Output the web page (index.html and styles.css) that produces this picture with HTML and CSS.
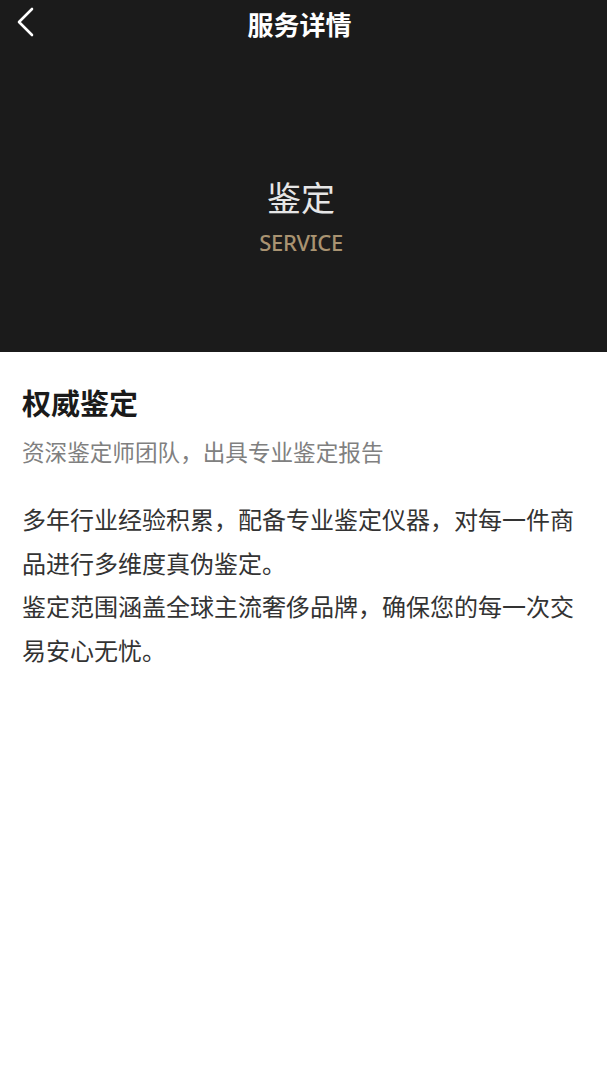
FILE: index.html
```html
<!DOCTYPE html>
<html lang="zh-CN">
<head>
<meta charset="utf-8">
<title>服务详情</title>
<link rel="stylesheet" href="styles.css">
</head>
<body>
<header class="header">
  <div class="nav">
    <div class="back">
      <svg width="20" height="30" viewBox="0 0 20 30"><path d="M16 2 L3 15 L16 28" fill="none" stroke="#ffffff" stroke-width="2.6" stroke-linecap="round" stroke-linejoin="round"/></svg>
    </div>
    <div class="nav-title">服务详情</div>
    <div class="nav-spacer"></div>
  </div>
  <div class="hero">
    <div class="hero-title">鉴定</div>
    <div class="hero-sub">SERVICE</div>
  </div>
</header>
<main class="content">
  <h1 class="title">权威鉴定</h1>
  <p class="subtitle">资深鉴定师团队，出具专业鉴定报告</p>
  <div class="body">
    <p>多年行业经验积累，配备专业鉴定仪器，对每一件商品进行多维度真伪鉴定。</p>
    <p>鉴定范围涵盖全球主流奢侈品牌，确保您的每一次交易安心无忧。</p>
  </div>
</main>
</body>
</html>
```

FILE: styles.css
```css
* { box-sizing: border-box; }
html, body {
  margin: 0;
  padding: 0;
  background: #ffffff;
  font-family: "Noto Sans", "Noto Sans CJK SC", sans-serif;
}
.header {
  background: #1b1b1b;
  height: 352px;
  display: flex;
  flex-direction: column;
}
.nav {
  height: 50px;
  display: grid;
  grid-template-columns: 60px 1fr 60px;
  align-items: center;
}
.back {
  padding-left: 16px;
  display: flex;
  align-items: center;
  height: 50px;
  padding-bottom: 6px;
}
.nav-title {
  text-align: center;
  color: #ffffff;
  font-size: 26px;
  font-weight: 700;
  line-height: 50px;
  padding-right: 8px;
}
.hero {
  flex: 1;
  display: flex;
  flex-direction: column;
  align-items: center;
  justify-content: center;
  padding-top: 30px;
  padding-right: 5px;
}
.hero-title {
  color: #e6e6e6;
  font-size: 34px;
  line-height: 44px;
}
.hero-sub {
  color: #a99371;
  font-size: 22px;
  font-weight: 500;
  letter-spacing: -0.3px;
  line-height: 30px;
  margin-top: 7px;
}
.content {
  padding: 32px 22px 0;
}
.title {
  margin: 0;
  font-size: 29px;
  line-height: 40px;
  font-weight: 700;
  color: #1a1a1a;
}
.subtitle {
  margin: 13px 0 0;
  font-size: 22.6px;
  line-height: 32px;
  color: #808080;
}
.body {
  margin-top: 29px;
}
.body p {
  margin: 0;
  font-size: 24px;
  line-height: 43.5px;
  color: #333333;
}
```
